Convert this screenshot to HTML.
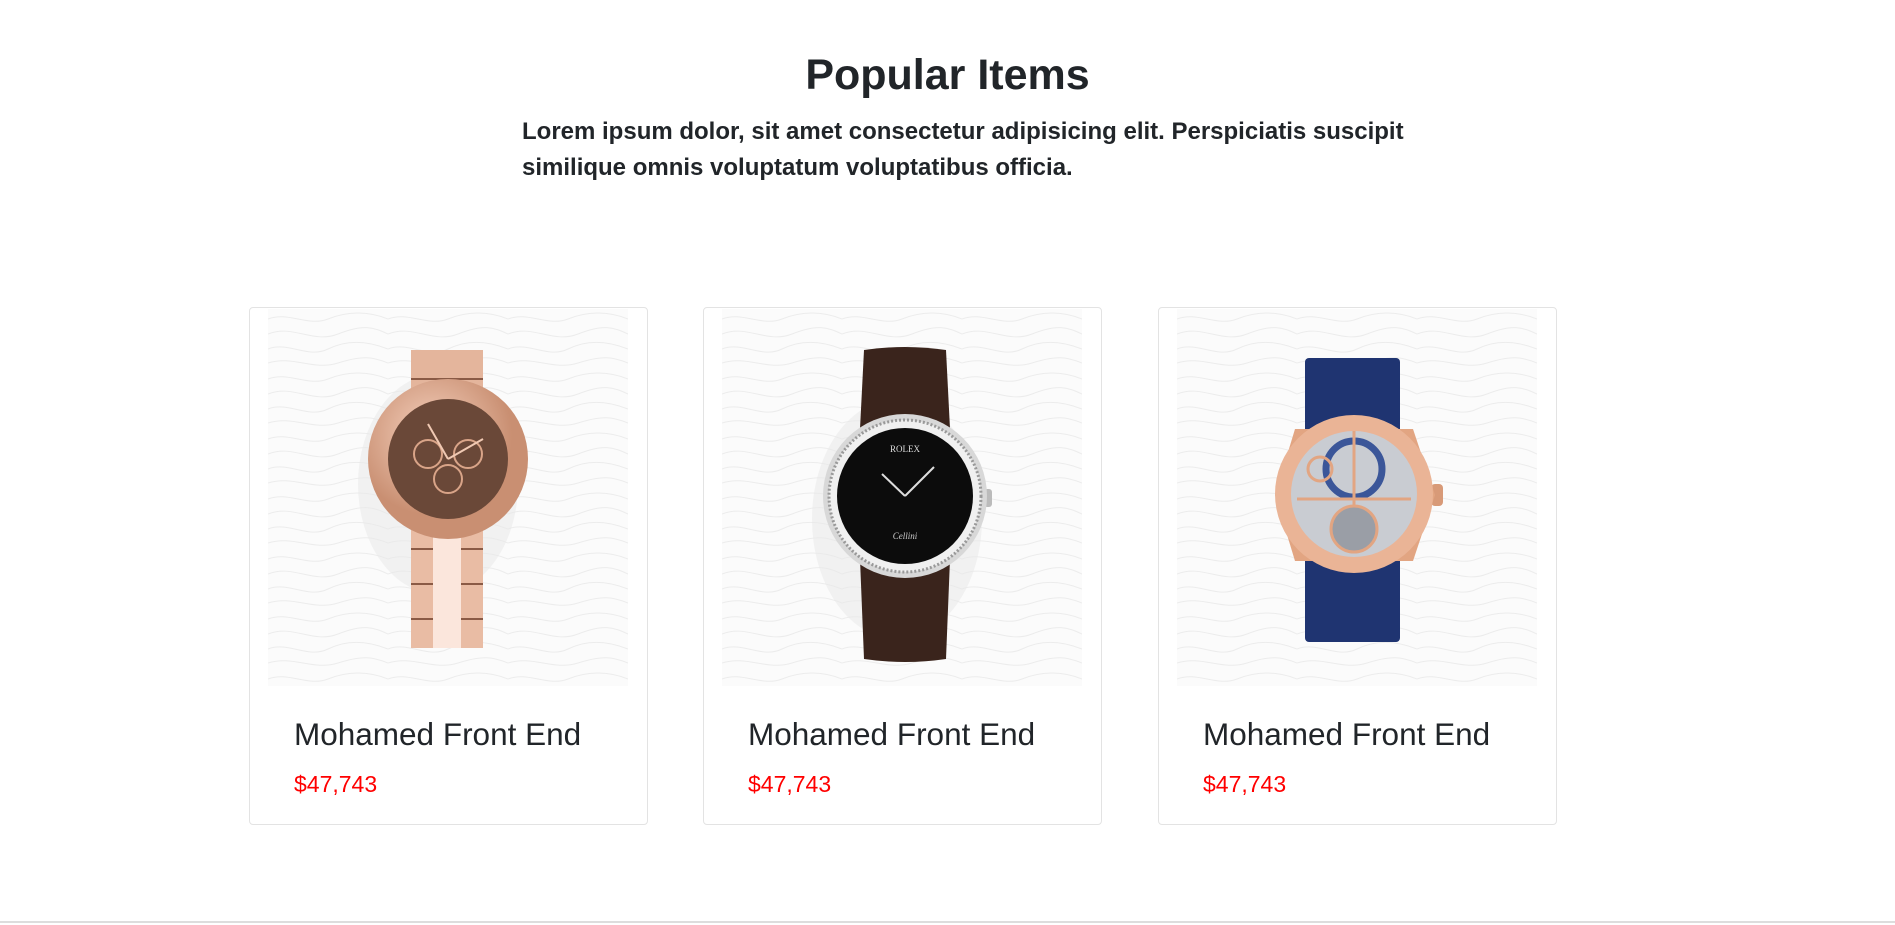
<!DOCTYPE html>
<html><head><meta charset="utf-8"><style>
html,body{margin:0;padding:0;background:#fff;}
body{width:1895px;height:925px;position:relative;overflow:hidden;font-family:"Liberation Sans",sans-serif;color:#212529;}
h2{position:absolute;left:0;width:1895px;top:46px;margin:0;text-align:center;font-size:43px;font-weight:bold;line-height:58px;}
.p{position:absolute;left:522px;top:114px;font-size:24px;font-weight:bold;line-height:36px;white-space:nowrap;}
.card{position:absolute;top:307px;width:397px;height:516px;border:1px solid #e3e3e3;border-radius:4px;background:#fff;}
.img{position:absolute;left:18px;top:1px;width:360px;height:377px;}
.t{position:absolute;left:44px;top:406px;font-size:31.5px;line-height:40px;white-space:nowrap;}
.pr{position:absolute;left:44px;top:461px;font-size:23px;line-height:30px;color:#f00;}
.line{position:absolute;left:0;top:921px;width:1895px;height:2px;background:#ddd;}
</style></head><body>
<h2>Popular Items</h2>
<div class="p">Lorem ipsum dolor, sit amet consectetur adipisicing elit. Perspiciatis suscipit<br>similique omnis voluptatum voluptatibus officia.</div>

<svg width="0" height="0" style="position:absolute"><defs>
<pattern id="topo" width="120" height="60" patternUnits="userSpaceOnUse">
<path d="M0 10 C20 2 40 18 60 10 S100 2 120 10 M0 25 C25 15 45 35 70 25 S105 18 120 25 M0 40 C20 32 40 50 60 40 S100 32 120 40 M0 54 C25 46 45 62 70 54 S105 48 120 54" fill="none" stroke="#ececec" stroke-width="1"/>
</pattern>
<radialGradient id="rg" cx="40%" cy="35%"><stop offset="0" stop-color="#f6d2bf"/><stop offset="1" stop-color="#c98f72"/></radialGradient>
</defs></svg>

<div class="card" style="left:249px">
<svg class="img" viewBox="0 0 360 377">
<rect width="360" height="377" fill="#fbfbfb"/><rect width="360" height="377" fill="url(#topo)"/>
<ellipse cx="170" cy="175" rx="80" ry="110" fill="#e8e8e8" opacity=".5"/>
<rect x="143" y="41" width="72" height="80" fill="#e4b59c"/>
<rect x="143" y="200" width="72" height="139" fill="#e9bca4"/>
<g stroke="#8a5a45" stroke-width="2"><line x1="143" y1="70" x2="215" y2="70"/><line x1="143" y1="240" x2="215" y2="240"/><line x1="143" y1="275" x2="215" y2="275"/><line x1="143" y1="310" x2="215" y2="310"/></g>
<rect x="165" y="200" width="28" height="139" fill="#fbe6dc"/>
<rect x="225" y="110" width="10" height="12" rx="3" fill="#d49a7e"/><rect x="225" y="182" width="10" height="12" rx="3" fill="#d49a7e"/>
<circle cx="180" cy="150" r="80" fill="url(#rg)"/>
<circle cx="180" cy="150" r="60" fill="#6a4838"/>
<circle cx="160" cy="145" r="14" fill="none" stroke="#d9a488" stroke-width="2"/><circle cx="200" cy="145" r="14" fill="none" stroke="#d9a488" stroke-width="2"/><circle cx="180" cy="170" r="14" fill="none" stroke="#d9a488" stroke-width="2"/>
<line x1="180" y1="150" x2="160" y2="115" stroke="#f0c9b3" stroke-width="2"/><line x1="180" y1="150" x2="215" y2="130" stroke="#f0c9b3" stroke-width="2"/>
</svg>
<div class="t">Mohamed Front End</div><div class="pr">$47,743</div>
</div>

<div class="card" style="left:703px">
<svg class="img" viewBox="0 0 360 377">
<rect width="360" height="377" fill="#fbfbfb"/><rect width="360" height="377" fill="url(#topo)"/>
<ellipse cx="175" cy="210" rx="85" ry="120" fill="#e8e8e8" opacity=".5"/>
<path d="M142 41 Q183 35 224 41 L228 120 L138 120 Z" fill="#3a241c"/>
<path d="M138 250 L228 250 L224 350 Q183 356 142 350 Z" fill="#3a241c"/>
<rect x="262" y="180" width="8" height="18" rx="3" fill="#bbb"/>
<circle cx="183" cy="187" r="82" fill="#d8d8d8"/>
<circle cx="183" cy="187" r="76" fill="#f0f0f0" stroke="#999" stroke-width="3" stroke-dasharray="2 2"/>
<circle cx="183" cy="187" r="68" fill="#0c0c0c"/>
<text x="183" y="143" text-anchor="middle" font-size="9" fill="#ddd" font-family="Liberation Serif">ROLEX</text>
<text x="183" y="230" text-anchor="middle" font-size="9" fill="#ccc" font-style="italic" font-family="Liberation Serif">Cellini</text>
<line x1="183" y1="187" x2="160" y2="165" stroke="#ddd" stroke-width="2"/><line x1="183" y1="187" x2="212" y2="158" stroke="#ddd" stroke-width="2"/>
</svg>
<div class="t">Mohamed Front End</div><div class="pr">$47,743</div>
</div>

<div class="card" style="left:1158px">
<svg class="img" viewBox="0 0 360 377">
<rect width="360" height="377" fill="#fbfbfb"/><rect width="360" height="377" fill="url(#topo)"/>
<rect x="128" y="49" width="95" height="90" rx="4" fill="#1f3471"/>
<rect x="128" y="240" width="95" height="93" rx="4" fill="#1f3471"/>
<rect x="254" y="175" width="12" height="22" rx="4" fill="#d89a78"/>
<path d="M118 120 L236 120 L258 186 L236 252 L118 252 L98 186 Z" fill="#e2a582"/>
<circle cx="177" cy="185" r="79" fill="#eab496"/>
<circle cx="177" cy="185" r="63" fill="#c9ccd2"/>
<circle cx="177" cy="160" r="28" fill="none" stroke="#3b5699" stroke-width="7"/>
<circle cx="177" cy="220" r="23" fill="#9a9ea6" stroke="#e2a582" stroke-width="3"/>
<circle cx="143" cy="160" r="12" fill="none" stroke="#e2a582" stroke-width="3"/>
<path d="M120 190 L234 190 M177 122 L177 197" stroke="#e2a582" stroke-width="3"/>
</svg>
<div class="t">Mohamed Front End</div><div class="pr">$47,743</div>
</div>
<div class="line"></div>
</body></html>
